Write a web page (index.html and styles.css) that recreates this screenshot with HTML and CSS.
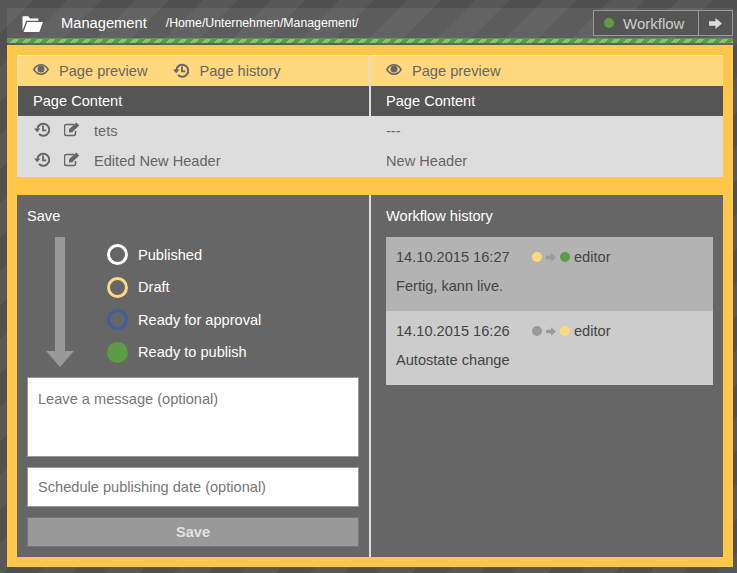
FILE: index.html
```html
<!DOCTYPE html>
<html lang="en">
<head>
    <meta charset="UTF-8">
    <title>Workflow</title>
    <link rel="stylesheet" href="styles.css">
</head>
<body>
    <svg width="0" height="0" class="defs">
        <symbol id="i-eye" viewBox="0 0 16 11">
            <path d="M.9 5.500C2.800 2.300 5.300.8 8 .8s5.200 1.500 7.100 4.700C13.200 8.700 10.700 10.200 8 10.200S2.800 8.700.9 5.500z" fill="none" stroke="currentColor" stroke-width="1.500"/>
            <circle cx="8" cy="5" r="3.500"/>
        </symbol>
        <symbol id="i-history" viewBox="0 0 16 15">
            <path d="M3.200 7.500A6 6 0 1 1 5 12" fill="none" stroke="currentColor" stroke-width="2"/>
            <path d="M0 6.500h6.400L3.200 10.300z"/>
            <path d="M9 3.500v4.800h3.300" fill="none" stroke="currentColor" stroke-width="1.800"/>
        </symbol>
        <symbol id="i-edit" viewBox="0 0 16 15">
            <path d="M11.500 9v2.500a2 2 0 0 1-2 2h-7a2 2 0 0 1-2-2v-7a2 2 0 0 1 2-2h7.500" fill="none" stroke="currentColor" stroke-width="1.500"/>
            <path d="M5 7.300 12.300.6l3 2.900L8.100 10.300 5 10.500z"/>
        </symbol>
    </svg>

    <div class="frame">
        <header class="topbar">
            <div class="title-row">
                <svg class="folder" viewBox="0 0 20 16" width="21" height="17"><path d="M.5 15V1h5.500l1.500 2.200h8V5.300H4L.5 15zM1.500 16 5 6.500h15L16.500 16z"/></svg>
                <span class="title">Management</span>
                <span class="crumb">/Home/Unternehmen/Management/</span>
                <div class="workflow">
                    <span class="workflow-label"><i class="dot green"></i>Workflow</span>
                    <span class="workflow-next">
                        <svg viewBox="0 0 14 12" width="13" height="11"><path d="M0 3.500h7V0l7 6-7 6V8.500H0z"/></svg>
                    </span>
                </div>
            </div>
            <div class="stripes"></div>
        </header>

        <main class="content">
            <section class="compare">
                <div class="col col-left">
                    <div class="tabs">
                        <a class="tab"><svg class="ico eye"><use href="#i-eye"/></svg>Page preview</a>
                        <a class="tab"><svg class="ico hist"><use href="#i-history"/></svg>Page history</a>
                    </div>
                    <div class="col-head">Page Content</div>
                    <div class="rows">
                        <div class="row">
                            <svg class="ico hist"><use href="#i-history"/></svg>
                            <svg class="ico edit"><use href="#i-edit"/></svg>
                            <span>tets</span>
                        </div>
                        <div class="row">
                            <svg class="ico hist"><use href="#i-history"/></svg>
                            <svg class="ico edit"><use href="#i-edit"/></svg>
                            <span>Edited New Header</span>
                        </div>
                    </div>
                </div>
                <div class="col col-right">
                    <div class="tabs">
                        <a class="tab"><svg class="ico eye"><use href="#i-eye"/></svg>Page preview</a>
                    </div>
                    <div class="col-head">Page Content</div>
                    <div class="rows">
                        <div class="row">---</div>
                        <div class="row">New Header</div>
                    </div>
                </div>
            </section>

            <section class="panels">
                <form class="panel panel-save">
                    <h2>Save</h2>
                    <div class="states">
                        <div class="arrow"></div>
                        <ul class="state-list">
                            <li><i class="ring white"></i>Published</li>
                            <li><i class="ring yellow"></i>Draft</li>
                            <li><i class="ring blue"></i>Ready for approval</li>
                            <li><i class="ring solid"></i>Ready to publish</li>
                        </ul>
                    </div>
                    <textarea class="field message" placeholder="Leave a message (optional)"></textarea>
                    <input class="field date" type="text" placeholder="Schedule publishing date (optional)">
                    <button class="save" type="button">Save</button>
                </form>
                <div class="panel panel-history">
                    <h2>Workflow history</h2>
                    <div class="entry entry-dark">
                        <div class="entry-top">
                            <span class="when">14.10.2015 16:27</span>
                            <i class="dot yellow"></i>
                            <svg class="mini" viewBox="0 0 14 12"><path d="M0 3.500h7V0l7 6-7 6V8.500H0z"/></svg>
                            <i class="dot green"></i>
                            <span class="who">editor</span>
                        </div>
                        <p>Fertig, kann live.</p>
                    </div>
                    <div class="entry">
                        <div class="entry-top">
                            <span class="when">14.10.2015 16:26</span>
                            <i class="dot grey"></i>
                            <svg class="mini" viewBox="0 0 14 12"><path d="M0 3.500h7V0l7 6-7 6V8.500H0z"/></svg>
                            <i class="dot yellow"></i>
                            <span class="who">editor</span>
                        </div>
                        <p>Autostate change</p>
                    </div>
                </div>
            </section>
        </main>
    </div>
</body>
</html>
```

FILE: styles.css
```css
* {
    box-sizing: border-box;
}
html, body {
    height: 100%;
}
body {
    margin: 0;
    overflow: hidden;
    font-family: "Liberation Sans", Arial, sans-serif;
    font-size: 14.6px;
    color: #fff;
    background-color: #555;
    background-image: repeating-linear-gradient(135deg, #585858 0, #585858 24px, #505050 24px, #505050 48px);
}
.defs {
    position: absolute;
}
.frame {
    padding: 8px 4px 0 7px;
}

/* top bar */
.topbar {
    background: rgba(255, 255, 255, 0.07);
    padding-bottom: 2px;
}
.title-row {
    height: 30px;
    display: flex;
    align-items: center;
    padding-left: 15px;
}
.folder {
    fill: #fff;
    margin-right: 18px;
}
.title {
    font-size: 14.7px;
    margin-right: 19px;
}
.crumb {
    font-size: 12.3px;
}
.workflow {
    margin-left: auto;
    align-self: flex-start;
    margin-top: 2px;
    display: flex;
    height: 26px;
    border: 1px solid #999;
    background: #555;
    color: #ccc;
    font-size: 15px;
}
.workflow-label {
    width: 105px;
    display: flex;
    align-items: center;
    padding-left: 10px;
    border-right: 1px solid #999;
}
.workflow-label .dot {
    margin-right: 9px;
}
.workflow-next {
    width: 33px;
    display: flex;
    align-items: center;
    justify-content: center;
}
.workflow-next svg {
    fill: #ddd;
}
.stripes {
    height: 5px;
    border-top: 1px solid #5c9c44;
    background: repeating-linear-gradient(135deg, #5c9c44 0, #5c9c44 4.25px, #8fbc7d 4.25px, #8fbc7d 8.5px);
}

.dot {
    display: inline-block;
    width: 10px;
    height: 10px;
    border-radius: 50%;
    flex: none;
}
.dot.green { background: #5c9c44; }
.dot.yellow { background: #ffd880; }
.dot.grey { background: #9a9a9a; }

/* main yellow area */
.content {
    background: #ffc64a;
    padding: 10px;
}
.compare {
    display: flex;
    gap: 2px;
    padding-left: 1px;
    background: #ddd;
}
.col-left {
    width: 351px;
}
.col-right {
    width: 352px;
}
.tabs {
    height: 31px;
    background: #ffd880;
    display: flex;
    align-items: center;
    padding-left: 15px;
    gap: 26px;
    color: #666;
    border-top: 1px solid #eee;
}
.tab {
    display: flex;
    align-items: center;
}
.ico {
    fill: #666;
    color: #666;
}
.ico.eye {
    width: 16px;
    height: 11px;
    margin-right: 10px;
    position: relative;
    top: -2px;
}
.ico.hist {
    width: 16px;
    height: 15px;
    margin-right: 10px;
    position: relative;
    top: -1px;
}
.col-head {
    height: 30px;
    line-height: 30px;
    background: #555;
    padding-left: 15px;
}
.rows {
    background: #ddd;
    color: #666;
    padding-bottom: 1px;
}
.row {
    height: 30px;
    display: flex;
    align-items: center;
    padding-left: 15px;
}
.row .ico.hist {
    margin-left: 1px;
    margin-right: 14px;
    top: -2px;
}
.ico.edit {
    width: 16px;
    height: 15px;
    margin-right: 14px;
    position: relative;
    top: -2px;
}

/* bottom panels */
.panels {
    display: flex;
    gap: 2px;
    margin-top: 18px;
    height: 362px;
    background: #ddd;
}
.panel {
    flex: 1;
    background: #666;
}
.panel-save {
    padding: 0 10px;
}
.panel-history {
    padding: 0 10px 0 15px;
}
h2 {
    margin: 0;
    height: 42px;
    line-height: 42px;
    font-size: 14.6px;
    font-weight: normal;
}
.states {
    display: flex;
    height: 140px;
}
.arrow {
    width: 28px;
    height: 130px;
    margin-left: 19px;
    position: relative;
    background: linear-gradient(#999, #999) center top / 10px 115px no-repeat;
}
.arrow::after {
    content: "";
    position: absolute;
    left: 0;
    bottom: 0;
    border-top: 16px solid #999;
    border-left: 14px solid transparent;
    border-right: 14px solid transparent;
}
.state-list {
    list-style: none;
    margin: 0 0 0 33px;
    padding: 1.5px 0 0;
}
.state-list li {
    display: flex;
    align-items: center;
    height: 32.5px;
}
.ring {
    width: 21px;
    height: 21px;
    border-radius: 50%;
    border: 3px solid;
    margin-right: 10px;
}
.ring.white { border-color: #fff; }
.ring.yellow { border-color: #ffd880; }
.ring.blue { border-color: #3f5ca8; }
.ring.solid { border-color: #5c9c44; background: #5c9c44; }
.field {
    display: block;
    width: 332px;
    border: 1px solid #999;
    background: #fff;
    font-family: inherit;
    font-size: 14.6px;
    padding: 0 10px;
    outline: none;
    resize: none;
    border-radius: 0;
}
.field::placeholder {
    color: #777;
    opacity: 1;
}
.message {
    height: 80px;
    padding-top: 13px;
}
.date {
    height: 40px;
    margin-top: 10px;
}
.save {
    display: block;
    width: 332px;
    height: 30px;
    margin-top: 10px;
    border: 1px solid #777;
    background: #999;
    color: #e2e2e2;
    font-family: inherit;
    font-size: 14.6px;
    font-weight: bold;
}
.entry {
    background: #ccc;
    color: #444;
    height: 74px;
    padding: 0 10px;
}
.entry-dark {
    background: #b3b3b3;
}
.entry-top {
    height: 40px;
    display: flex;
    align-items: center;
}
.when {
    width: 136px;
}
.mini {
    width: 10px;
    height: 9px;
    fill: #999;
    margin: 0 4px;
}
.who {
    margin-left: 4px;
}
.entry p {
    margin: 0;
    line-height: 18px;
}
```
